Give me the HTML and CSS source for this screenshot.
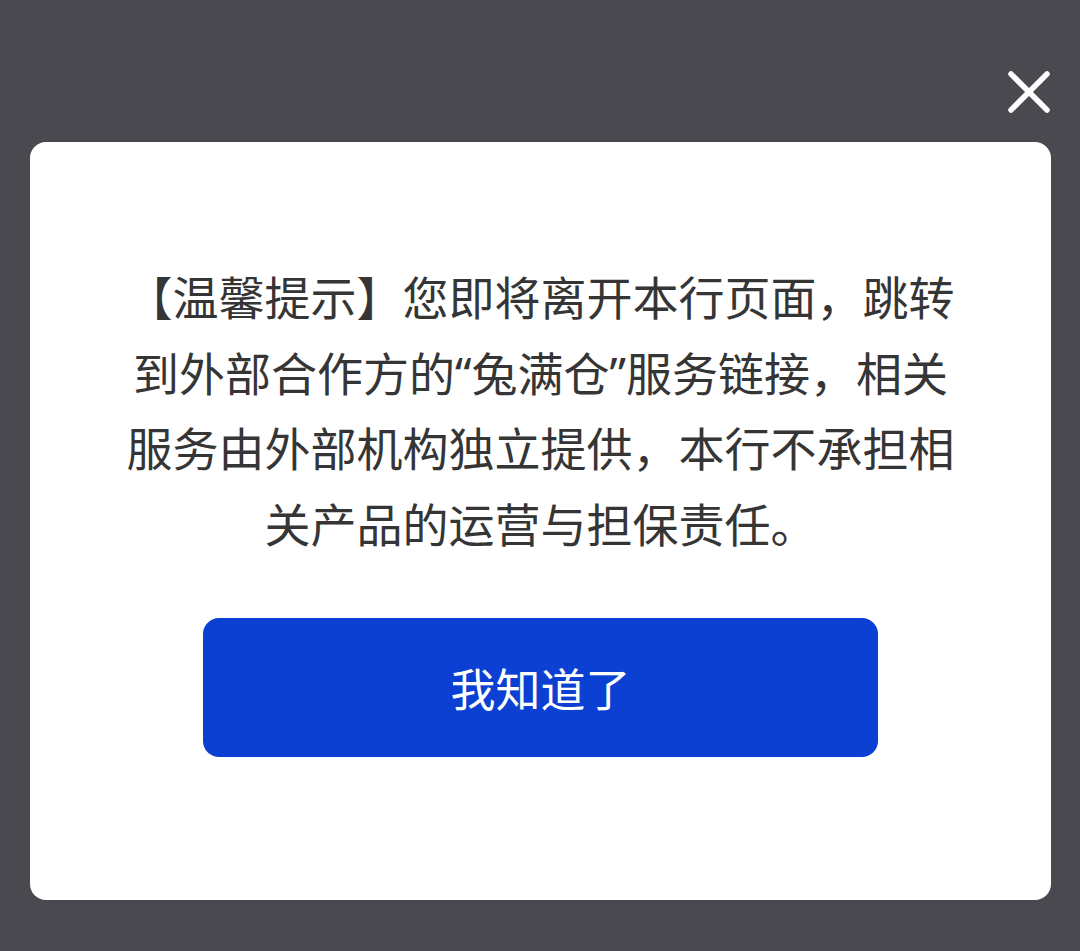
FILE: index.html
```html
<!DOCTYPE html>
<html lang="zh-CN">
<head>
<meta charset="utf-8">
<title>温馨提示</title>
<link rel="stylesheet" href="styles.css">
</head>
<body>
<div class="overlay">
  <div class="topbar">
    <button class="close" aria-label="关闭">
      <svg viewBox="0 0 44 44" width="44" height="44">
        <path d="M4 4 L40 40 M40 4 L4 40" stroke="#fff" stroke-width="5.5" stroke-linecap="round" fill="none"/>
      </svg>
    </button>
  </div>
  <div class="dialog">
    <p class="message">【温馨提示】您即将离开本行页面，跳转到外部合作方的“兔满仓”服务链接，相关服务由外部机构独立提供，本行不承担相关产品的运营与担保责任。</p>
    <button class="confirm">我知道了</button>
  </div>
</div>
</body>
</html>
```

FILE: styles.css
```css
html, body {
  margin: 0;
  padding: 0;
}
body {
  background: #4a4950;
  width: 1080px;
  height: 951px;
  overflow: hidden;
  font-family: "Noto Sans", "Noto Sans CJK SC", sans-serif;
}
.overlay {
  display: flex;
  flex-direction: column;
  padding: 0 29px 0 30px;
}
.topbar {
  display: flex;
  justify-content: flex-end;
  height: 142px;
  align-items: flex-start;
}
.close {
  margin-top: 70px;
  margin-right: 0;
  width: 44px;
  height: 44px;
  padding: 0;
  border: 0;
  background: none;
  display: flex;
}
.dialog {
  background: #fff;
  border-radius: 16px;
  height: 758px;
  box-sizing: border-box;
  display: flex;
  flex-direction: column;
  align-items: center;
  padding-top: 118px;
}
.message {
  margin: 0;
  width: 840px;
  font-size: 46px;
  line-height: 75.5px;
  color: #353535;
  text-align: center;
}
.confirm {
  margin-top: 56px;
  width: 675px;
  height: 139px;
  border: 0;
  border-radius: 16px;
  background: #0b40d2;
  color: #fff;
  font-family: "Noto Sans CJK SC", "Noto Sans", sans-serif;
  font-size: 45px;
  padding: 0;
}
```
